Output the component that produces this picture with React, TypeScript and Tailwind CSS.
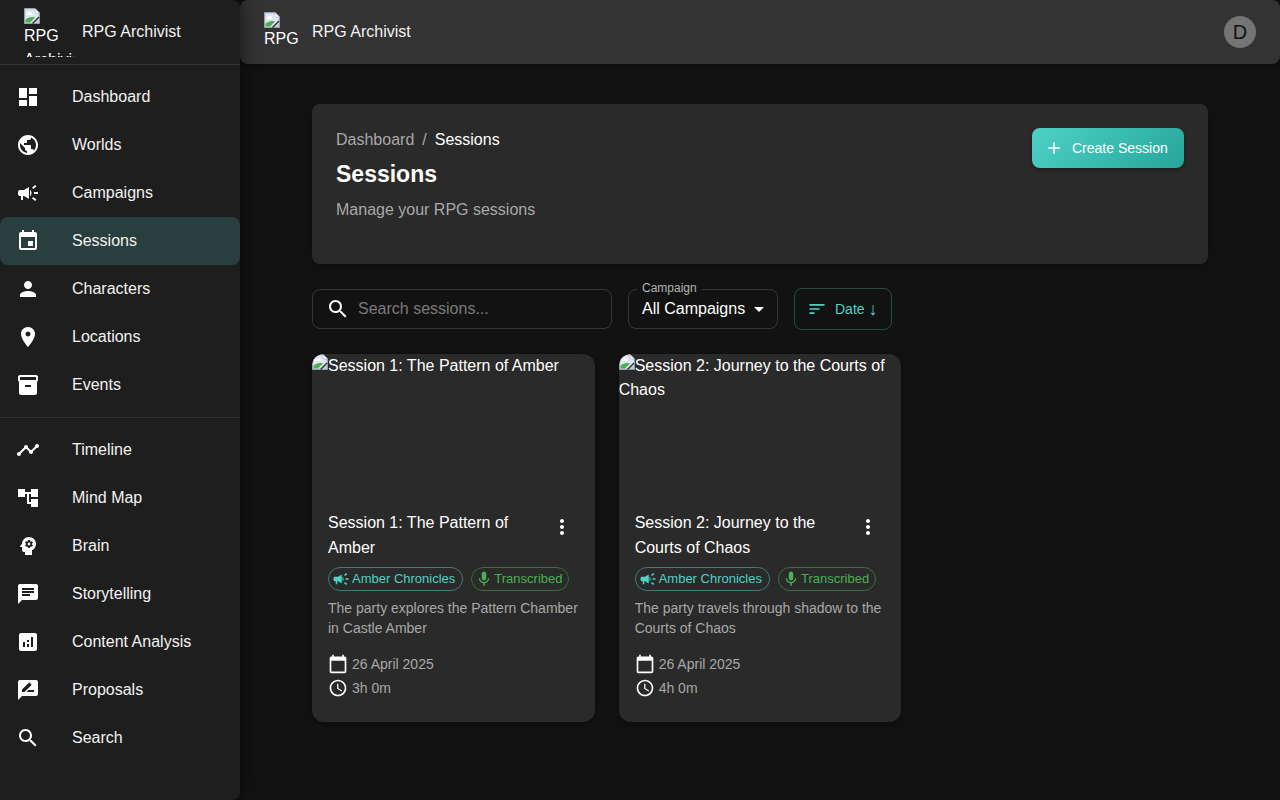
import React from "react";

// Material icon paths
const ICONS: Record<string, string> = {
  dashboard: "M3 13h8V3H3zm0 8h8v-6H3zm10 0h8V11h-8zm0-18v6h8V3z",
  public:
    "M12 2C6.48 2 2 6.48 2 12s4.48 10 10 10 10-4.48 10-10S17.52 2 12 2m-1 17.93c-3.95-.49-7-3.85-7-7.93 0-.62.08-1.21.21-1.79L9 15v1c0 1.1.9 2 2 2zm6.9-2.54c-.26-.81-1-1.39-1.9-1.39h-1v-3c0-.55-.45-1-1-1H8v-2h2c.55 0 1-.45 1-1V7h2c1.1 0 2-.9 2-2v-.41c2.93 1.19 5 4.06 5 7.41 0 2.08-.8 3.97-2.1 5.39",
  campaign:
    "M18 11v2h4v-2zm-2 6.61c.96.71 2.21 1.65 3.2 2.39.4-.53.8-1.07 1.2-1.6-.99-.74-2.24-1.68-3.2-2.4-.4.54-.8 1.08-1.2 1.61M20.4 5.6c-.4-.53-.8-1.07-1.2-1.6-.99.74-2.24 1.68-3.2 2.4.4.53.8 1.07 1.2 1.6.96-.72 2.21-1.65 3.2-2.4M4 9c-1.1 0-2 .9-2 2v2c0 1.1.9 2 2 2h1v4h2v-4h1l5 3V6L8 9zm11.5 3c0-1.33-.58-2.53-1.5-3.35v6.69c.92-.81 1.5-2.01 1.5-3.34",
  event:
    "M17 12h-5v5h5zM16 1v2H8V1H6v2H5c-1.11 0-1.99.9-1.99 2L3 19c0 1.1.89 2 2 2h14c1.1 0 2-.9 2-2V5c0-1.1-.9-2-2-2h-1V1zm3 18H5V8h14z",
  person:
    "M12 12c2.21 0 4-1.79 4-4s-1.79-4-4-4-4 1.79-4 4 1.79 4 4 4m0 2c-2.67 0-8 1.34-8 4v2h16v-2c0-2.66-5.33-4-8-4",
  place:
    "M12 2C8.13 2 5 5.13 5 9c0 5.25 7 13 7 13s7-7.75 7-13c0-3.87-3.13-7-7-7m0 9.5c-1.38 0-2.5-1.12-2.5-2.5s1.12-2.5 2.5-2.5 2.5 1.12 2.5 2.5-1.12 2.5-2.5 2.5",
  inventory:
    "M20 2H4c-1 0-2 .9-2 2v3.01c0 .72.43 1.34 1 1.69V20c0 1.1 1.1 2 2 2h14c.9 0 2-.9 2-2V8.7c.57-.35 1-.97 1-1.69V4c0-1.1-1-2-2-2m-5 12H9v-2h6zm5-7H4V4l16-.02z",
  timeline:
    "M23 8c0 1.1-.9 2-2 2-.18 0-.35-.02-.51-.07l-3.56 3.55c.05.16.07.34.07.52 0 1.1-.9 2-2 2s-2-.9-2-2c0-.18.02-.36.07-.52l-2.55-2.55c-.16.05-.34.07-.52.07s-.36-.02-.52-.07l-4.55 4.56c.05.16.07.33.07.51 0 1.1-.9 2-2 2s-2-.9-2-2 .9-2 2-2c.18 0 .35.02.51.07l4.56-4.55C8.02 9.36 8 9.18 8 9c0-1.1.9-2 2-2s2 .9 2 2c0 .18-.02.36-.07.52l2.55 2.55c.16-.05.34-.07.52-.07s.36.02.52.07l3.55-3.56C19.02 8.35 19 8.18 19 8c0-1.1.9-2 2-2s2 .9 2 2",
  tree: "M22 11V3h-7v3H9V3H2v8h7V8h2v10h4v3h7v-8h-7v3h-2V8h2v3z",
  psychology:
    "M13 8.57c-.79 0-1.43.64-1.43 1.43s.64 1.43 1.43 1.43 1.43-.64 1.43-1.43-.64-1.43-1.43-1.43M13 3C9.25 3 6.2 5.94 6.02 9.64L4.1 12.2c-.25.33-.01.8.4.8H6v3c0 1.1.9 2 2 2h1v3h7v-4.68c2.36-1.12 4-3.53 4-6.32 0-3.87-3.13-7-7-7m3 7c0 .13-.01.26-.03.39l.83.66c.08.06.1.16.05.25l-.8 1.39c-.05.09-.16.12-.24.09l-.99-.4c-.21.16-.43.29-.67.39L14 13.83c-.01.1-.1.17-.2.17h-1.6c-.1 0-.18-.07-.2-.17l-.15-1.06c-.25-.1-.47-.23-.68-.39l-.99.4c-.09.03-.2 0-.25-.09l-.8-1.39c-.05-.08-.03-.19.05-.25l.84-.66c-.01-.13-.02-.26-.02-.39s.02-.27.04-.39l-.85-.66c-.08-.06-.1-.16-.05-.26l.8-1.38c.05-.09.15-.12.24-.09l1 .4c.2-.15.43-.29.67-.39L12 6.17c.02-.1.1-.17.2-.17h1.6c.1 0 .18.07.2.17l.15 1.06c.24.1.46.23.67.39l1-.4c.09-.03.2 0 .24.09l.8 1.38c.05.09.03.2-.05.26l-.85.66c.03.12.04.25.04.39",
  chat: "M20 2H4c-1.1 0-1.99.9-1.99 2L2 22l4-4h14c1.1 0 2-.9 2-2V4c0-1.1-.9-2-2-2M6 9h12v2H6zm8 5H6v-2h8zm4-6H6V6h12z",
  analytics:
    "M19 3H5c-1.1 0-2 .9-2 2v14c0 1.1.9 2 2 2h14c1.1 0 2-.9 2-2V5c0-1.1-.9-2-2-2M9 17H7v-5h2zm4 0h-2v-3h2zm0-5h-2v-2h2zm4 5h-2V7h2z",
  review:
    "M20 2H4c-1.1 0-1.99.9-1.99 2L2 22l4-4h14c1.1 0 2-.9 2-2V4c0-1.1-.9-2-2-2M6 14v-2.47l6.88-6.88c.2-.2.51-.2.71 0l1.77 1.77c.2.2.2.51 0 .71L8.47 14zm12 0h-7.5l2-2H18z",
  search:
    "M15.5 14h-.79l-.28-.27C15.41 12.59 16 11.11 16 9.5 16 5.91 13.09 3 9.5 3S3 5.91 3 9.5 5.91 16 9.5 16c1.61 0 3.09-.59 4.23-1.57l.27.28v.79l5 4.99L20.49 19zm-6 0C7.01 14 5 11.99 5 9.5S7.01 5 9.5 5 14 7.01 14 9.5 11.99 14 9.5 14",
  add: "M19 13h-6v6h-2v-6H5v-2h6V5h2v6h6z",
  sort: "M3 18h6v-2H3zM3 6v2h18V6zm0 7h12v-2H3z",
  more: "M12 8c1.1 0 2-.9 2-2s-.9-2-2-2-2 .9-2 2 .9 2 2 2m0 2c-1.1 0-2 .9-2 2s.9 2 2 2 2-.9 2-2-.9-2-2-2m0 6c-1.1 0-2 .9-2 2s.9 2 2 2 2-.9 2-2-.9-2-2-2",
  mic: "M12 14c1.66 0 2.99-1.34 2.99-3L15 5c0-1.66-1.34-3-3-3S9 3.34 9 5v6c0 1.66 1.34 3 3 3m5.3-3c0 3-2.54 5.1-5.3 5.1S6.7 14 6.7 11H5c0 3.41 2.72 6.23 6 6.72V21h2v-3.28c3.28-.48 6-3.3 6-6.72z",
  calendar:
    "M20 3h-1V1h-2v2H7V1H5v2H4c-1.1 0-2 .9-2 2v16c0 1.1.9 2 2 2h16c1.1 0 2-.9 2-2V5c0-1.1-.9-2-2-2m0 18H4V8h16z",
  clock:
    "M11.99 2C6.47 2 2 6.48 2 12s4.47 10 9.99 10C17.52 22 22 17.52 22 12S17.52 2 11.99 2M12 20c-4.42 0-8-3.58-8-8s3.58-8 8-8 8 3.58 8 8-3.58 8-8 8M12.5 7H11v6l5.25 3.15.75-1.23-4.5-2.67z",
  dropdown: "M7 10l5 5 5-5z",
};

function Icon({ name, className }: { name: string; className?: string }) {
  return (
    <svg viewBox="0 0 24 24" fill="currentColor" className={className}>
      <path d={ICONS[name]} />
    </svg>
  );
}

// the browser's broken image marker, the pictures never loaded
function BrokenImage({ className }: { className?: string }) {
  return (
    <svg viewBox="0 0 16 16" className={className}>
      <path d="M0.5 0.5H11L15.5 5V15.5H0.5Z" fill="#c3c9d4" stroke="#9aa0a6" />
      <path d="M1.5 1.5H10.5L14.5 5.5V9L9 13.5L6 14.5H1.5Z" fill="#dfe7f7" />
      <path d="M3 5.5C4 3.5 7 3.5 8 5.5C9 5.5 9.5 6.5 8.5 7H3C2 7 2 5.5 3 5.5Z" fill="#ffffff" />
      <path d="M1.5 14.5V12C4 9 8 8.5 11 9.5L6 14.5Z" fill="#4caf50" />
      <path d="M11 0.5V5H15.5Z" fill="#ffffff" stroke="#9aa0a6" strokeWidth="0.5" />
      <path d="M15 9L8.5 15.5" stroke="#2a2a2a" strokeWidth="1.2" />
    </svg>
  );
}

const navTop = [
  { label: "Dashboard", icon: "dashboard" },
  { label: "Worlds", icon: "public" },
  { label: "Campaigns", icon: "campaign" },
  { label: "Sessions", icon: "event", active: true },
  { label: "Characters", icon: "person" },
  { label: "Locations", icon: "place" },
  { label: "Events", icon: "inventory" },
];

const navBottom = [
  { label: "Timeline", icon: "timeline" },
  { label: "Mind Map", icon: "tree" },
  { label: "Brain", icon: "psychology" },
  { label: "Storytelling", icon: "chat" },
  { label: "Content Analysis", icon: "analytics" },
  { label: "Proposals", icon: "review" },
  { label: "Search", icon: "search" },
];

const sessions = [
  {
    title: "Session 1: The Pattern of Amber",
    description: "The party explores the Pattern Chamber in Castle Amber",
    date: "26 April 2025",
    duration: "3h 0m",
  },
  {
    title: "Session 2: Journey to the Courts of Chaos",
    description: "The party travels through shadow to the Courts of Chaos",
    date: "26 April 2025",
    duration: "4h 0m",
  },
];

function NavItem({ label, icon, active }: { label: string; icon: string; active?: boolean }) {
  return (
    <div className={`flex h-12 items-center rounded-lg pl-4 ${active ? "bg-[#283f3d]" : ""}`}>
      <Icon name={icon} className="h-6 w-6 shrink-0 text-white" />
      <span className="ml-8 text-base text-[#f2f2f2]">{label}</span>
    </div>
  );
}

function SessionCard({ session }: { session: (typeof sessions)[number] }) {
  return (
    <div className="overflow-hidden rounded-xl bg-[#2a2a2a] shadow-[0_2px_8px_rgba(0,0,0,0.35)]">
      <div className="h-[140px] overflow-hidden text-base leading-6 text-white">
        <BrokenImage className="inline h-4 w-4 align-[1px]" />
        {session.title}
      </div>
      <div className="px-4 pt-4 pb-[22px]">
        <div className="flex items-start justify-between">
          <div className="w-[200px] text-base leading-[25px] text-white">{session.title}</div>
          <Icon name="more" className="mt-[5px] mr-[5px] h-6 w-6 shrink-0 text-white" />
        </div>
        <div className="mt-[7px] flex gap-2">
          <div className="flex h-6 items-center rounded-full border border-[#4fd1c5]/50 pr-[7px] pl-[3px] text-[13px] text-[#4fd1c5]">
            <Icon name="campaign" className="h-[18px] w-[18px]" />
            <span className="ml-[2px]">Amber Chronicles</span>
          </div>
          <div className="flex h-6 items-center rounded-full border border-[#4caf50]/50 pr-1.5 pl-[3px] text-[13px] text-[#4caf50]">
            <Icon name="mic" className="h-[18px] w-[18px]" />
            <span className="ml-px">Transcribed</span>
          </div>
        </div>
        <p className="mt-[7px] text-sm leading-5 text-[#a8a8a8]">{session.description}</p>
        <div className="mt-[14px] flex h-6 items-center gap-1 text-sm text-[#a8a8a8]">
          <Icon name="calendar" className="h-5 w-5 text-white" />
          {session.date}
        </div>
        <div className="flex h-6 items-center gap-1 text-sm text-[#a8a8a8]">
          <Icon name="clock" className="h-5 w-5 text-white" />
          {session.duration}
        </div>
      </div>
    </div>
  );
}

export default function App() {
  return (
    <div className="flex h-screen overflow-hidden bg-[#121212] font-['Liberation_Sans',Arial,sans-serif] text-white">
      {/* Sidebar */}
      <aside className="z-10 flex w-60 shrink-0 flex-col rounded-r-lg bg-[#1e1e1e] shadow-[0_0_20px_rgba(0,0,0,0.6)]">
        <div className="flex h-[65px] items-start border-b border-white/10 pt-2 pl-6">
          <div className="h-[49px] w-[50px] shrink-0 overflow-hidden text-base leading-[24px] text-white">
            <BrokenImage className="h-4 w-4" />
            <div>RPG</div>
            <div>Archivist</div>
          </div>
          <span className="mt-[12px] ml-2 text-base text-[#f2f2f2]">RPG Archivist</span>
        </div>
        <nav className="pt-2 pb-2">
          {navTop.map((item) => (
            <NavItem key={item.label} {...item} />
          ))}
        </nav>
        <div className="h-px bg-white/[0.07]" />
        <nav className="py-2">
          {navBottom.map((item) => (
            <NavItem key={item.label} {...item} />
          ))}
        </nav>
      </aside>

      <div className="flex min-w-0 flex-1 flex-col">
        {/* App bar */}
        <header className="flex h-16 shrink-0 items-center rounded-lg bg-[#333333] pr-6 pl-6 shadow-[0_2px_6px_rgba(0,0,0,0.4)]">
          <div className="h-10 w-10 shrink-0 overflow-hidden text-base leading-[22px]">
            <BrokenImage className="h-4 w-4" />
            <div>RPG</div>
          </div>
          <span className="ml-2 text-base text-[#f2f2f2]">RPG Archivist</span>
          <div className="ml-auto flex h-8 w-8 items-center justify-center rounded-full bg-[#757575] text-xl text-[#121212]">
            D
          </div>
        </header>

        {/* Main */}
        <main className="mx-auto w-[896px] pt-10">
          <section className="flex h-40 items-start justify-between rounded-lg bg-[#2a2a2a] p-6 shadow-[0_2px_8px_rgba(0,0,0,0.25)]">
            <div>
              <div className="flex text-base leading-6">
                <span className="text-[#a8a8a8]">Dashboard</span>
                <span className="mx-2 text-[#a8a8a8]">/</span>
                <span className="text-white">Sessions</span>
              </div>
              <h1 className="mt-[6px] mb-2 text-[23px] leading-8 font-bold text-white">Sessions</h1>
              <p className="text-base leading-6 text-[#a8a8a8]">Manage your RPG sessions</p>
            </div>
            <button className="flex h-10 w-[152px] items-center rounded-lg bg-[linear-gradient(135deg,#4fd1c5,#26a69a)] pl-3 text-sm text-white shadow-[0_2px_4px_rgba(0,0,0,0.3)]">
              <Icon name="add" className="h-5 w-5" />
              <span className="ml-2">Create Session</span>
            </button>
          </section>

          <div className="mt-6 flex items-center gap-4">
            <div className="flex h-10 w-[300px] items-center rounded-lg border border-white/15 pl-[13px]">
              <Icon name="search" className="h-6 w-6 text-white" />
              <span className="ml-2 text-base text-[#7a7a7a]">Search sessions...</span>
            </div>
            <div className="relative flex h-10 w-[150px] items-center rounded-lg border border-white/15 pl-[13px]">
              <span className="absolute -top-[10px] left-[8px] bg-[#121212] px-[5px] text-xs leading-4 text-[#b3b3b3]">
                Campaign
              </span>
              <span className="text-base text-white">All Campaigns</span>
              <Icon name="dropdown" className="absolute top-[7px] right-[6px] h-6 w-6 text-white" />
            </div>
            <div className="flex h-[42px] w-[98px] items-center rounded-lg border border-[#4fd1c5]/30 pl-3 text-sm text-[#4fd1c5]">
              <Icon name="sort" className="h-5 w-5" />
              <span className="ml-2 flex items-center gap-1">
                Date <span className="text-[18px] leading-none">↓</span>
              </span>
            </div>
          </div>

          <div className="mt-6 grid grid-cols-3 items-start gap-6">
            {sessions.map((session) => (
              <SessionCard key={session.title} session={session} />
            ))}
          </div>
        </main>
      </div>
    </div>
  );
}
